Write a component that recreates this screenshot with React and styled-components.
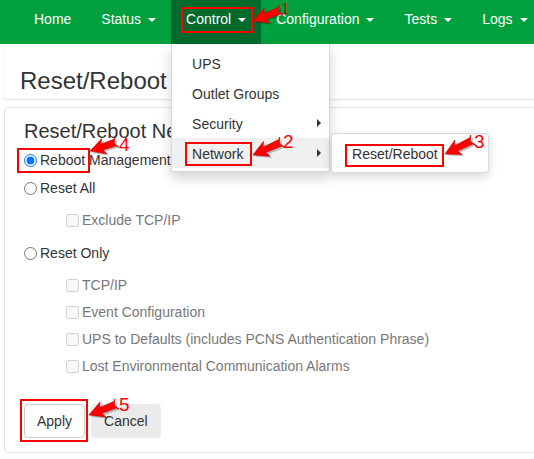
import React from 'react';
import styled, { createGlobalStyle } from 'styled-components';

const GlobalStyle = createGlobalStyle`
    html, body {
        margin: 0;
        padding: 0;
        background: #fff;
        overflow: hidden;
    }
    body {
        font-family: "Liberation Sans", Arial, sans-serif;
        font-size: 14px;
        color: #333;
    }
    * {
        box-sizing: border-box;
    }
`;

const Page = styled.div`
    position: relative;
    width: 534px;
    height: 459px;
    overflow: hidden;
`;

const Navbar = styled.nav`
    display: flex;
    height: 44px;
    padding-left: 19px;
    background: #00a03e;
    position: relative;
    z-index: 5;
`;

const NavItem = styled.div`
    position: relative;
    height: 44px;
    padding: 9px 15px 15px;
    line-height: 20px;
    color: #fff;
    white-space: nowrap;
    background: ${({ $active }) => ($active ? '#006b2c' : 'transparent')};
`;

const Caret = styled.span`
    display: inline-block;
    width: 0;
    height: 0;
    margin-left: 7px;
    vertical-align: middle;
    border-top: 4px solid #fff;
    border-left: 4px solid transparent;
    border-right: 4px solid transparent;
`;

const Menu = styled.div`
    position: absolute;
    top: 100%;
    left: 0;
    width: 159px;
    padding: 4px 0 3px;
    background: #fff;
    border: 1px solid rgba(0, 0, 0, 0.15);
    border-top: none;
    box-shadow: 0 6px 12px rgba(0, 0, 0, 0.175);
    color: #333;
    line-height: 20px;
`;

const SubMenu = styled(Menu)`
    top: -5px;
    left: calc(100% + 2px);
    width: 158px;
    border-top: 1px solid rgba(0, 0, 0, 0.15);
    border-radius: 4px;
    padding: 4px 0;
    box-shadow: 0 4px 10px rgba(0, 0, 0, 0.15);
`;

const MenuItem = styled.div`
    position: relative;
    height: 30px;
    padding: 6px 20px 4px;
    background: ${({ $hover }) => ($hover ? '#f0f0f0' : 'transparent')};
`;

const SideCaret = styled.span`
    position: absolute;
    right: 8px;
    top: 11px;
    width: 0;
    height: 0;
    border-left: 4px solid #333;
    border-top: 4px solid transparent;
    border-bottom: 4px solid transparent;
`;

const Content = styled.div`
    padding-left: 4px;
    margin-right: -10px;
`;

const HeaderCard = styled.div`
    height: 55px;
    padding: 24px 0 0 16px;
    border-radius: 0 0 4px 4px;
    box-shadow: 0 1px 2px rgba(0, 0, 0, 0.13);
`;

const PageTitle = styled.h1`
    margin: 0;
    font-size: 24px;
    line-height: 26px;
    font-weight: normal;
    color: #333;
`;

const Panel = styled.div`
    display: flex;
    flex-direction: column;
    align-items: flex-start;
    margin-top: 8px;
    padding: 12px 0 14px 19px;
    border: 1px solid #e4e4e4;
    border-radius: 4px;
`;

const PanelTitle = styled.h2`
    margin: 0 0 8px;
    font-size: 20px;
    line-height: 22px;
    font-weight: normal;
    color: #333;
`;

const RadioRow = styled.label`
    display: flex;
    align-items: center;
    height: 20px;
    margin-bottom: 8px;
    white-space: nowrap;
    input {
        width: 13px;
        height: 13px;
        margin: 0 3px 0 0;
    }
`;

const CheckGroup = styled.div`
    display: flex;
    flex-direction: column;
    margin: 4px 0 6px;
    padding-left: 42px;
`;

const CheckRow = styled.label`
    display: flex;
    align-items: center;
    height: 20px;
    margin-bottom: 7px;
    color: #777;
    white-space: nowrap;
    input {
        width: 13px;
        height: 13px;
        margin: 0 3px 0 0;
    }
`;

const Buttons = styled.div`
    display: flex;
    gap: 6px;
    margin-top: 15px;
`;

const Button = styled.button`
    height: 34px;
    padding: 6px 12px;
    font-family: inherit;
    font-size: 14px;
    line-height: 20px;
    color: #333;
    border-radius: 4px;
    border: 1px solid ${({ $plain }) => ($plain ? '#ebebeb' : '#ccc')};
    background: ${({ $plain }) => ($plain ? '#ebebeb' : '#fff')};
`;

const Layer = styled.svg`
    position: absolute;
    top: 0;
    left: 0;
    z-index: 20;
    pointer-events: none;
`;

const Mark = styled.div`
    position: absolute;
    z-index: 19;
    left: ${({ $x }) => $x}px;
    top: ${({ $y }) => $y}px;
    width: ${({ $w }) => $w}px;
    height: ${({ $h }) => $h}px;
    border: 2px solid #f00;
`;

const Number = styled.text`
    font-family: ${({ $serif }) => ($serif ? '"Liberation Serif", serif' : '"Liberation Sans", Arial, sans-serif')};
    font-size: ${({ $serif }) => ($serif ? '17px' : '19px')};
    fill: ${({ $serif }) => ($serif ? '#c8000a' : '#f00')};
`;

const navItems = ['Home', 'Status', 'Control', 'Configuration', 'Tests', 'Logs'];

const Arrow = ({ tip, tail }) => {
    const dx = tail[0] - tip[0];
    const dy = tail[1] - tip[1];
    const len = Math.sqrt(dx * dx + dy * dy);
    const ang = (Math.atan2(dy, dx) * 180) / Math.PI;
    const pts = [
        [0, 0],
        [15, -8],
        [12.5, -3],
        [len - 2, -3.5],
        [len, -5.5],
        [len - 3, 0],
        [len, 5.5],
        [len - 2, 3.5],
        [12.5, 3],
        [15, 8]
    ]
        .map(p => p.join(','))
        .join(' ');
    return (
        <g transform={`translate(${tip[0]} ${tip[1]}) rotate(${ang})`}>
            <polygon points={pts} fill="rgba(0,0,0,0.25)" transform="translate(1.5 2.5)" />
            <polygon points={pts} fill="#f00" stroke="#c00" strokeWidth="0.6" />
        </g>
    );
};

export default function App() {
    return (
        <Page>
            <GlobalStyle />
            <Navbar>
                {navItems.map(name => (
                    <NavItem key={name} $active={name === 'Control'}>
                        {name}
                        {name !== 'Home' && <Caret />}
                        {name === 'Control' && (
                            <Menu>
                                <MenuItem>UPS</MenuItem>
                                <MenuItem>Outlet Groups</MenuItem>
                                <MenuItem>
                                    Security
                                    <SideCaret />
                                </MenuItem>
                                <MenuItem $hover>
                                    Network
                                    <SideCaret />
                                    <SubMenu>
                                        <MenuItem>Reset/Reboot</MenuItem>
                                    </SubMenu>
                                </MenuItem>
                            </Menu>
                        )}
                    </NavItem>
                ))}
            </Navbar>
            <Content>
                <HeaderCard>
                    <PageTitle>Reset/Reboot</PageTitle>
                </HeaderCard>
                <Panel>
                    <PanelTitle>Reset/Reboot Network</PanelTitle>
                    <RadioRow>
                        <input type="radio" name="mode" defaultChecked />
                        Reboot Management Interface
                    </RadioRow>
                    <RadioRow>
                        <input type="radio" name="mode" />
                        Reset All
                    </RadioRow>
                    <CheckGroup>
                        <CheckRow>
                            <input type="checkbox" disabled />
                            Exclude TCP/IP
                        </CheckRow>
                    </CheckGroup>
                    <RadioRow>
                        <input type="radio" name="mode" />
                        Reset Only
                    </RadioRow>
                    <CheckGroup>
                        <CheckRow>
                            <input type="checkbox" disabled />
                            TCP/IP
                        </CheckRow>
                        <CheckRow>
                            <input type="checkbox" disabled />
                            Event Configuration
                        </CheckRow>
                        <CheckRow>
                            <input type="checkbox" disabled />
                            UPS to Defaults (includes PCNS Authentication Phrase)
                        </CheckRow>
                        <CheckRow>
                            <input type="checkbox" disabled />
                            Lost Environmental Communication Alarms
                        </CheckRow>
                    </CheckGroup>
                    <Buttons>
                        <Button>Apply</Button>
                        <Button $plain>Cancel</Button>
                    </Buttons>
                </Panel>
            </Content>

            {/* annotations */}
            <Mark $x={181} $y={7} $w={72} $h={26} />
            <Mark $x={185} $y={142} $w={67} $h={24} />
            <Mark $x={345} $y={144} $w={99} $h={23} />
            <Mark $x={17} $y={148} $w={73} $h={25} />
            <Mark $x={20} $y={399} $w={68} $h={43} />
            <Layer width="534" height="459">
                <Arrow tip={[253, 21]} tail={[281, 10]} />
                <Arrow tip={[253, 155]} tail={[282, 142]} />
                <Arrow tip={[445, 154]} tail={[473, 140]} />
                <Arrow tip={[90, 151]} tail={[117, 142]} />
                <Arrow tip={[89, 415]} tail={[117, 404]} />
                <Number $serif x="281" y="14">1</Number>
                <Number x="283" y="148">2</Number>
                <Number x="474" y="148">3</Number>
                <Number x="119" y="151">4</Number>
                <Number x="119" y="411">5</Number>
            </Layer>
        </Page>
    );
}
